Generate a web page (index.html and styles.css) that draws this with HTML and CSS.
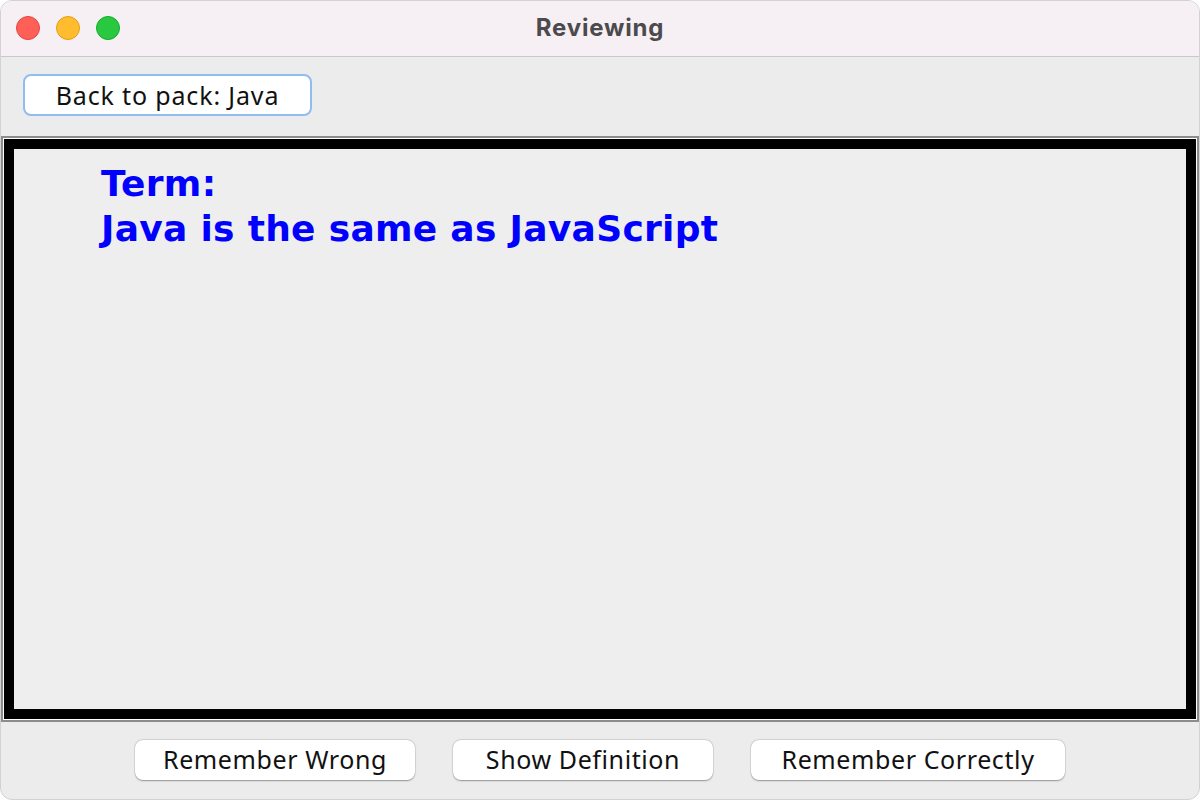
FILE: index.html
```html
<!DOCTYPE html>
<html>
<head>
<meta charset="utf-8">
<link rel="stylesheet" href="styles.css">
</head>
<body>
<div class="window">
  <div class="titlebar">
    <div class="lights">
      <span class="light red"></span>
      <span class="light yellow"></span>
      <span class="light green"></span>
    </div>
    <div class="title">Reviewing</div>
  </div>
  <div class="toolbar">
    <button class="btn btn-focus">Back to pack: Java</button>
  </div>
  <div class="panel">
    <div class="card">
      <div class="term">Term:</div>
      <div class="term">Java is the same as JavaScript</div>
    </div>
  </div>
  <div class="actions">
    <button class="btn btn-action w-wrong">Remember Wrong</button>
    <button class="btn btn-action w-show">Show Definition</button>
    <button class="btn btn-action w-correct">Remember Correctly</button>
  </div>
</div>
</body>
</html>
```
FILE: styles.css
```css
html, body {
  margin: 0;
  padding: 0;
  background: #ffffff;
}
body {
  width: 1200px;
  height: 800px;
  overflow: hidden;
}
.window {
  width: 1200px;
  height: 800px;
  box-sizing: border-box;
  background: #ececec;
  border-radius: 12px;
  overflow: hidden;
  display: flex;
  flex-direction: column;
  border: 1px solid #d2d2d2;
}
.titlebar {
  height: 55px;
  flex: none;
  background: #f6f0f4;
  border-bottom: 1px solid #c9c7c9;
  display: flex;
  align-items: center;
  position: relative;
}
.lights {
  display: flex;
  gap: 16px;
  padding-left: 15px;
  margin-top: -1px;
}
.light {
  width: 24px;
  height: 24px;
  border-radius: 50%;
  box-sizing: border-box;
}
.red { background: #fe5f57; border: 1px solid #e2463f; }
.yellow { background: #febc2e; border: 1px solid #e1a116; }
.green { background: #28c840; border: 1px solid #12ac28; }
.title {
  position: absolute;
  left: 0;
  right: 0;
  top: 12px;
  text-align: center;
  font-family: Inter, "Noto Sans", sans-serif;
  font-weight: 700;
  font-size: 24px;
  letter-spacing: 0.8px;
  color: #4d4a4d;
}
.toolbar {
  height: 79px;
  flex: none;
  padding: 17px 0 0 22px;
  box-sizing: border-box;
}
.btn {
  font-family: "Noto Sans", "Open Sans", sans-serif;
  font-size: 25px;
  letter-spacing: 0.6px;
  color: #111;
  background: #ffffff;
  border-radius: 8px;
  padding: 0;
  margin: 0;
  cursor: default;
}
.btn-focus {
  width: 289px;
  height: 42px;
  border: 2px solid #8fbdf0;
  line-height: 34px;
  letter-spacing: 0.85px;
}
.panel {
  height: 586px;
  flex: none;
  box-sizing: border-box;
  border: 2px solid #8c8c8c;
  padding: 1px;
  background: #ffffff;
}
.card {
  height: 100%;
  box-sizing: border-box;
  border: 10px solid #000000;
  background: #eeeeee;
  padding: 12px 0 0 87px;
}
.term {
  font-family: "DejaVu Sans", Verdana, sans-serif;
  font-weight: 700;
  font-size: 36px;
  letter-spacing: 0.3px;
  line-height: 45px;
  color: #0000ff;
}
.actions {
  flex: 1;
  display: flex;
  justify-content: center;
  gap: 38px;
  padding-top: 18px;
  box-sizing: border-box;
}
.btn-action {
  height: 40px;
  border: none;
  box-shadow: 0 0.5px 1.5px rgba(0,0,0,0.35), 0 0 0 0.5px rgba(0,0,0,0.08);
  line-height: 34px;
  padding-bottom: 3px;
}
.w-wrong { width: 280px; }
.w-show { width: 260px; }
.w-correct { width: 314px; }
```
